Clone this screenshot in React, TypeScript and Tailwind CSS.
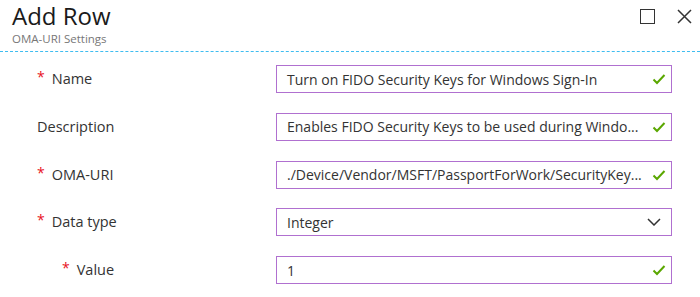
import React from "react";

const font = { fontFamily: '"Open Sans", "Noto Sans", sans-serif' };

const Check = () => (
  <svg width="14" height="12" viewBox="0 0 14 12" className="shrink-0">
    <path d="M1.5 6.5 L5 10 L12.5 2" fill="none" stroke="#5aa700" strokeWidth="2" />
  </svg>
);

const Chevron = () => (
  <svg width="14" height="8" viewBox="0 0 14 8" className="shrink-0">
    <path d="M1 1 L7 7 L13 1" fill="none" stroke="#333333" strokeWidth="1.5" />
  </svg>
);

interface RowProps {
  label: string;
  required?: boolean;
  indent?: boolean;
  value: string;
  select?: boolean;
}

const Row: React.FC<RowProps> = ({ label, required, indent, value, select }) => (
  <div className="flex h-[28px] items-center">
    <div className={`flex w-[276px] items-center ${indent ? "pl-[62px]" : "pl-[37px]"}`}>
      {required && <span className="mr-[7px] -mt-[4px] text-[14px] leading-none text-[#e81123]">*</span>}
      <span className="text-[14.5px] text-[#333333]">{label}</span>
    </div>
    <div
      className={`flex h-[28px] w-[396px] items-center justify-between border border-[#b070d0] pl-[10px] ${
        select ? "pr-[10px]" : "pr-[5px]"
      }`}
    >
      <span className="whitespace-nowrap text-[14px] text-[#333333]">{value}</span>
      {select ? <Chevron /> : <Check />}
    </div>
  </div>
);

export default function App() {
  return (
    <div className="h-[297px] w-[700px] overflow-hidden bg-white" style={font}>
      <div className="flex items-start justify-between pl-[12px] pr-[8px] pt-[3px]">
        <div>
          <div className="text-[24px] leading-[26px] text-[#1a1a1a]">Add Row</div>
          <div className="mt-[2px] text-[11.5px] leading-[16px] text-[#777777]">OMA-URI Settings</div>
        </div>
        <div className="flex items-center gap-[22px] pt-[6px]">
          <div className="h-[15px] w-[15px] border-[1.5px] border-[#333333]" />
          <svg width="15" height="15" viewBox="0 0 15 15">
            <path d="M1 1 L14 14 M14 1 L1 14" stroke="#333333" strokeWidth="1.5" />
          </svg>
        </div>
      </div>
      <div className="mt-[4px] border-t border-dashed border-[#3fbdf0]" />
      <div className="mt-[13px] flex flex-col gap-[19.75px]">
        <Row label="Name" required value="Turn on FIDO Security Keys for Windows Sign-In" />
        <Row label="Description" value="Enables FIDO Security Keys to be used during Windo..." />
        <Row label="OMA-URI" required value="./Device/Vendor/MSFT/PassportForWork/SecurityKey..." />
        <Row label="Data type" required value="Integer" select />
        <Row label="Value" required indent value="1" />
      </div>
    </div>
  );
}
